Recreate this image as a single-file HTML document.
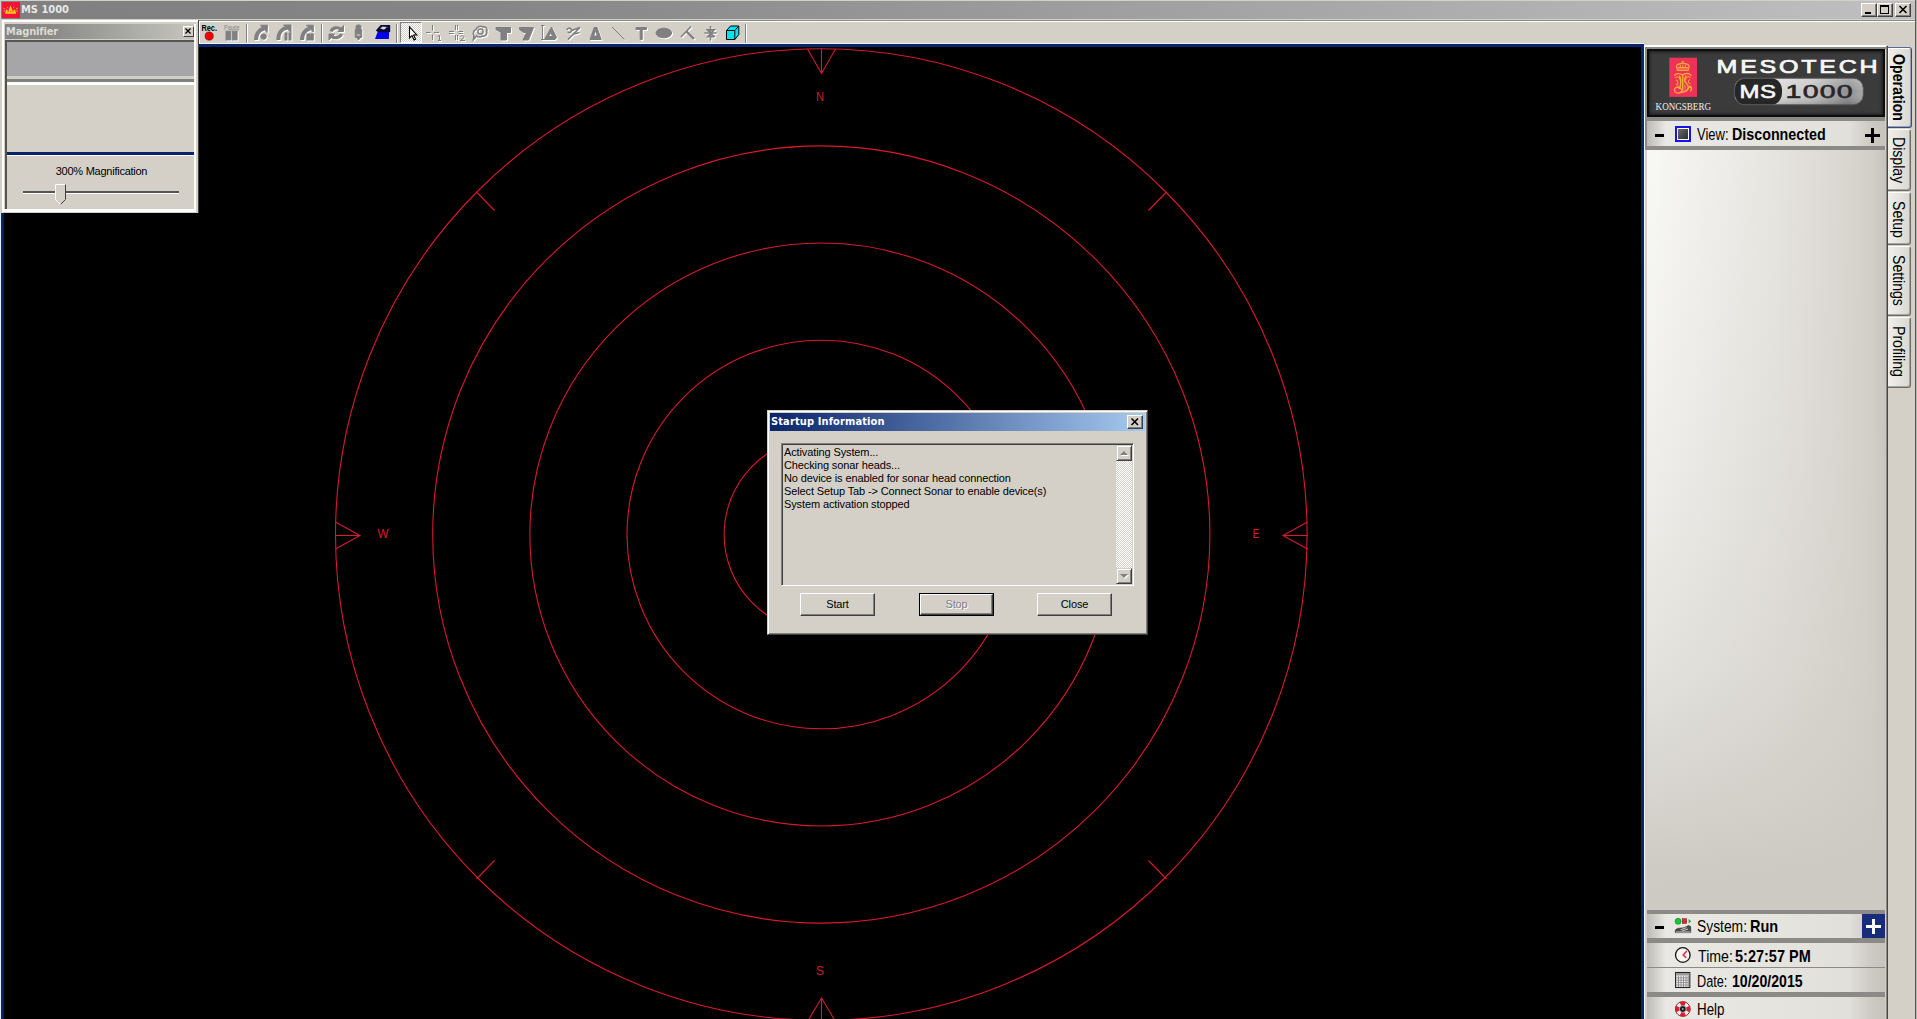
<!DOCTYPE html>
<html lang="en">
<head>
<meta charset="utf-8">
<title>MS 1000</title>
<style>
html,body{margin:0;padding:0;}
body{width:1917px;height:1019px;overflow:hidden;background:#d4d0c8;position:relative;font-family:"Liberation Sans",sans-serif;font-size:11px;color:#000;}
.abs{position:absolute;}
#titlebar{left:1px;top:0;width:1914px;height:19px;background:linear-gradient(to right,#808080 0%,#858585 25%,#c0c0c0 100%);border-top:1px solid #d4d0c8;box-sizing:border-box;}
#titletext{left:21px;top:3px;font-family:"DejaVu Sans Condensed","DejaVu Sans","Liberation Sans",sans-serif;font-weight:bold;font-size:11px;color:#e8e8e8;letter-spacing:0;line-height:14px;white-space:nowrap;}
#appicon{left:2px;top:2px;width:18px;height:16px;background:#f01438;}
.wbtn{top:3px;width:16px;height:14px;background:#d4d0c8;box-sizing:border-box;border:1px solid;border-color:#fff #404040 #404040 #fff;box-shadow:inset -1px -1px 0 #808080;}
#canvas{left:1px;top:44px;width:1643px;height:975px;background:#000;}
#topline{left:199px;top:44px;width:1445px;height:3px;background:#0a246a;}
#leftline{left:1px;top:213px;width:3px;height:806px;background:linear-gradient(to right,#0e2a72,#081a4a);}
#leftlight{left:0;top:213px;width:1px;height:806px;background:#e4e8fa;}
#rightline{left:1641px;top:44px;width:3px;height:975px;background:#0a246a;}

/* magnifier */
#mag{left:2px;top:20px;width:197px;height:193px;background:#d4d0c8;box-sizing:border-box;border:2px solid;border-color:#fff #d4d0c8 #d4d0c8 #fff;}
#magR{left:194px;top:24px;width:2px;height:188px;background:#fff;}
#magB{left:2px;top:209px;width:194px;height:3px;background:#fff;}
#magEdge{left:198px;top:20px;width:1px;height:193px;background:#404040;}
#magtitle{left:5px;top:24px;width:189px;height:15px;background:linear-gradient(to right,#858585 0%,#8a8a88 25%,#c6c6be 100%);}
#magtext{left:6px;top:24px;font-weight:bold;font-size:11px;line-height:15px;color:#dcdcd6;font-family:"DejaVu Sans Condensed","DejaVu Sans","Liberation Sans",sans-serif;letter-spacing:-0.15px;}
#magclose{left:183px;top:26px;width:11px;height:11px;background:#d4d0c8;box-sizing:border-box;border:1px solid;border-color:#fff #404040 #404040 #fff;}
#magframe{left:5px;top:40px;width:189px;height:169px;box-sizing:border-box;border-left:2px solid #55554f;border-top:2px solid #55554f;background:#d4d0c8;}
#maggray{left:7px;top:42px;width:187px;height:34px;background:#a6a6a9;}
#magl1{left:7px;top:76px;width:187px;height:3px;background:#cfcfc8;}
#magl2{left:7px;top:79px;width:187px;height:3px;background:#80807a;}
#magl3{left:7px;top:82px;width:187px;height:3px;background:#fff;}
#magnavy{left:7px;top:152px;width:187px;height:3px;background:#0a246a;}
#magnavyw{left:7px;top:155px;width:187px;height:1px;background:#fff;}
#maglabel{left:8px;top:164px;width:187px;text-align:center;font-size:11px;line-height:14px;letter-spacing:-0.25px;}
#track{left:23px;top:191px;width:156px;height:2px;background:#55554f;border-bottom:1px solid #fff;}

/* dialog */
#dlg{left:767px;top:410px;width:381px;height:225px;background:#d4d0c8;box-sizing:border-box;border:1px solid;border-color:#d4d0c8 #404040 #404040 #d4d0c8;box-shadow:inset 1px 1px 0 #fff,inset -1px -1px 0 #808080;}
#dlgtitle{left:770px;top:413px;width:375px;height:18px;background:linear-gradient(to right,#0a246a 0%,#a6caf0 100%);}
#dlgtext{left:771px;top:415px;font-family:"DejaVu Sans Condensed","DejaVu Sans","Liberation Sans",sans-serif;font-weight:bold;font-size:11px;line-height:14px;color:#fff;letter-spacing:0.12px;white-space:nowrap;}
#dlgclose{left:1127px;top:415px;width:16px;height:14px;background:#d4d0c8;box-sizing:border-box;border:1px solid;border-color:#fff #404040 #404040 #fff;box-shadow:inset -1px -1px 0 #808080;}
#dlgbox{left:781px;top:443px;width:353px;height:143px;box-sizing:border-box;border:1px solid;border-color:#808080 #fff #fff #808080;box-shadow:inset 1px 1px 0 #404040,inset -1px -1px 0 #d4d0c8;background:#d4d0c8;}
#dlglines{left:784px;top:446px;font-size:11px;line-height:13px;letter-spacing:-0.12px;white-space:nowrap;color:#000;}
#sbtrack{left:1116px;top:445px;width:16px;height:139px;background:repeating-conic-gradient(#fff 0% 25%,#d4d0c8 0% 50%) 0 0/2px 2px;}
.sbbtn{left:1116px;width:16px;height:16px;background:#d4d0c8;box-sizing:border-box;border:1px solid;border-color:#d4d0c8 #404040 #404040 #d4d0c8;box-shadow:inset 1px 1px 0 #fff,inset -1px -1px 0 #808080;}
.btn{top:593px;width:75px;height:23px;background:#d4d0c8;box-sizing:border-box;border:1px solid;border-color:#fff #404040 #404040 #fff;box-shadow:inset -1px -1px 0 #808080;text-align:center;font-size:11px;line-height:20px;letter-spacing:-0.12px;}

/* toolbar */
#tbEdgeD{left:198px;top:21px;width:1px;height:26px;background:#404040;}
#tbTopW{left:199px;top:21px;width:1716px;height:1px;background:#fff;}
#tbLeftW{left:199px;top:21px;width:1px;height:23px;background:#fff;}
#tbBotW{left:199px;top:43px;width:1445px;height:1px;background:#eef0f4;}
.sep{top:24px;width:1px;height:19px;background:#808080;border-right:1px solid #fff;}
#selbtn{left:400px;top:22px;width:22px;height:21px;box-sizing:border-box;background:repeating-conic-gradient(#fff 0% 25%,#d4d0c8 0% 50%) 0 0/2px 2px;border:1px solid;border-color:#808080 #fff #fff #808080;}
.ic .st{fill:none}
.ic path:not(.st),.ic rect,.ic circle:not(.st),.ic ellipse{stroke:none}

/* right panel */
#rp{left:1644px;top:44px;width:271px;height:975px;background:#d4d0c8;}
#rpW{left:1644px;top:45px;width:242px;height:2px;background:#fff;}
#rpWv{left:1644px;top:45px;width:1px;height:974px;background:#f4f4f2;}
#rpG{left:1645px;top:47px;width:241px;height:2px;background:#8a8a84;}
#rpGv{left:1645px;top:47px;width:2px;height:103px;background:#8a8a84;}
#rpgrad{left:1647px;top:150px;width:239px;height:762px;background:linear-gradient(to right,#f8f8f5 0%,#f0efec 25%,#e6e4df 55%,#dad7d1 82%,#d2cfc9 94%,#c6c3bd 100%);}
#rpgradv{left:1647px;top:150px;width:239px;height:762px;background:linear-gradient(to bottom,rgba(208,205,198,0) 0%,rgba(208,205,198,0.06) 15%,rgba(208,205,198,0.16) 32%,rgba(208,205,198,0.3) 50%,rgba(208,205,198,0.5) 68%,rgba(206,203,196,0.78) 84%,rgba(205,202,195,0.97) 94%,rgba(205,202,195,1) 100%);}
#rpedge{left:1886px;top:46px;width:2px;height:973px;background:linear-gradient(to right,#8a8882 0,#8a8882 1px,#48463f 1px,#48463f 2px);}
#logo{left:1647px;top:49px;width:238px;height:68px;background:#3b3b3b;box-sizing:border-box;border:2px solid #0c0c0c;box-shadow:inset 0 0 3px 1px #1c1c1c;}
#kred{left:1669px;top:58px;width:28px;height:39px;background:#ee3150;}
#kname{left:1655px;top:100px;font-family:"Liberation Serif",serif;font-size:10px;line-height:12px;color:#f2f2f2;letter-spacing:0.35px;white-space:nowrap;}
#meso{left:1717px;top:57px;font-family:"Liberation Sans",sans-serif;font-weight:bold;font-size:17px;line-height:20px;color:#f4f4f4;white-space:nowrap;transform-origin:0 0;}
#pill{left:1734px;top:78px;width:129px;height:27px;border-radius:10px;background:linear-gradient(to right,#262626 0,#262626 46px,#c8c8c8 47px,#eeeeee 60px,#d0d0d0 90px,#9a9a9a 118px,#b8b8b8 129px);box-sizing:border-box;border:1px solid #555;overflow:hidden;}
#pillms{left:1739px;top:81px;font-weight:bold;font-size:17px;line-height:20px;color:#f4f4f4;white-space:nowrap;transform-origin:0 0;}
#pill1000{left:1787px;top:81px;font-weight:bold;font-size:17px;line-height:20px;color:#d8d8d8;-webkit-text-stroke:1.2px #2a2a2a;white-space:nowrap;transform-origin:0 0;}
.row{left:1647px;width:238px;height:24px;background:linear-gradient(to right,#bdbbb5 0%,#e9e8e4 8%,#e6e4df 50%,#e2e0db 85%,#cfccc6 93%,#c6c3bd 100%);}
.rowsh{left:1647px;width:238px;background:#8b8a86;}
.lab{font-size:16.3px;line-height:18px;white-space:nowrap;transform-origin:0 0;color:#000;}
.labb{font-weight:bold;}
.minus{left:1655px;width:9px;height:3px;background:#000;}
.tab{left:1888px;width:23px;box-sizing:border-box;background:linear-gradient(to right,#f0efec,#dbd8d2);border:1px solid;border-color:#fff #6e6c66 #6e6c66 #8c8a84;border-left:none;border-radius:0 3px 3px 0;box-shadow:inset -1px -1px 0 #a8a6a0;}
.tabt{font-size:16px;line-height:18px;white-space:nowrap;transform-origin:0 0;color:#000;}
</style>
</head>
<body>
<!-- title bar -->
<div id="titlebar" class="abs"></div>
<div id="appicon" class="abs"></div>
<svg class="abs" style="left:2px;top:2px" width="18" height="16" viewBox="2 2 18 16"><path d="M5 13.8L6.2 9.2L8.4 11L10.6 5.6L12.8 11L15 9.2L16.2 13.8Z" fill="#ffc81e"/><path d="M3.5 8.2L5.2 9M3.4 11L5 11M17.7 8.2L16 9M17.8 11L16.2 11M7.2 6.8L8 8.2M14 6.8L13.2 8.2" stroke="#ffb43c" stroke-width="0.9" fill="none"/><path d="M7.5 11.6H9M10 11.6H11.4M12.4 11.6H13.8" stroke="#d05010" stroke-width="0.8"/></svg>
<div id="titletext" class="abs">MS 1000</div>
<div class="abs wbtn" style="left:1861px;width:16px"></div>
<div class="abs wbtn" style="left:1877px;width:16px"></div>
<div class="abs wbtn" style="left:1895px;width:16px"></div>

<svg class="abs" style="left:1861px;top:3px" width="50" height="14" viewBox="1861 3 50 14">
 <rect x="1865" y="12" width="6" height="2" fill="#000"/>
 <rect x="1880.5" y="5.5" width="8" height="8" fill="none" stroke="#000" stroke-width="1"/><rect x="1880" y="5" width="9" height="2" fill="#000"/>
 <path d="M1899.5 6L1906.5 13M1906.5 6L1899.5 13" stroke="#000" stroke-width="1.6" fill="none"/>
</svg>

<div class="abs" style="left:1915px;top:0;width:1px;height:1019px;background:#5a5852"></div>
<div class="abs" style="left:1916px;top:0;width:1px;height:1019px;background:#b4b2ac"></div>
<div class="abs" style="left:199px;top:20px;width:1716px;height:1px;background:#8c8a84"></div>
<!-- sonar canvas -->
<div id="canvas" class="abs"></div>
<div id="topline" class="abs"></div>
<div id="leftline" class="abs"></div>
<div id="leftlight" class="abs"></div>
<div id="rightline" class="abs"></div>
<svg class="abs" style="left:0;top:0" width="1917" height="1019" viewBox="0 0 1917 1019">
 <g fill="none" stroke="#d81a2c" stroke-width="1.1">
  <clipPath id="cv"><rect x="2" y="46" width="1641" height="973"/></clipPath>
  <g clip-path="url(#cv)">
   <circle cx="821.3" cy="534.5" r="97.15"/>
   <circle cx="821.3" cy="534.5" r="194.3"/>
   <circle cx="821.3" cy="534.5" r="291.45"/>
   <circle cx="821.3" cy="534.5" r="388.6"/>
   <circle cx="821.3" cy="534.5" r="485.8"/>
   <!-- N -->
   <path d="M807.5 49L821.5 73.5L835.5 49M821.5 48.5V73.5"/>
   <!-- S -->
   <path d="M807.5 1021.5L821.5 998L835.5 1021.5M821.5 1022V998"/>
   <!-- W -->
   <path d="M335.5 522L360 535.5L335.5 549M335 535.5H360"/>
   <!-- E -->
   <path d="M1307.5 522L1283 535.5L1307.5 549M1308 535.5H1283"/>
   <!-- diagonal ticks -->
   <path d="M1166.5 192L1148.5 210.5M476.5 192L494.5 210.5M1166.5 879L1148.5 860.5M476.5 879L494.5 860.5"/>
  </g>
  <g fill="#d81a2c" stroke="none" font-family="Liberation Sans, sans-serif" font-size="12.5" text-anchor="middle">
   <text x="820" y="101" textLength="8" lengthAdjust="spacingAndGlyphs">N</text>
   <text x="820" y="975" textLength="8" lengthAdjust="spacingAndGlyphs">S</text>
   <text x="383" y="538" textLength="11" lengthAdjust="spacingAndGlyphs">W</text>
   <text x="1256" y="538" textLength="7" lengthAdjust="spacingAndGlyphs">E</text>
  </g>
 </g>
</svg>


<!-- toolbar -->
<div id="tbEdgeD" class="abs"></div>
<div id="tbTopW" class="abs"></div>
<div id="tbLeftW" class="abs"></div>
<div id="tbBotW" class="abs"></div>
<div class="abs sep" style="left:246px"></div>
<div class="abs sep" style="left:321px"></div>
<div class="abs sep" style="left:396px"></div>
<div class="abs sep" style="left:745px"></div>
<div id="selbtn" class="abs"></div>
<svg class="abs" style="left:0;top:0" width="760" height="46" viewBox="0 0 760 46">
 <defs>
  <g id="icons">
   <!-- pause bars -->
   <rect x="226" y="31.2" width="4.8" height="8.7"/><rect x="232.3" y="31.2" width="4.8" height="8.7"/>
   <!-- arrow 1 -->
   <path d="M256 40C256 33 260 29.5 264 28.5" fill="none" stroke-width="4" class="st"/>
   <path d="M260.5 25.2L267.5 25.2L267 32.5Z"/><circle cx="263.6" cy="36.6" r="2.7"/>
   <!-- arrow 2 -->
   <path d="M278.3 40C278.3 32.5 282.5 28.5 287 27.8" fill="none" stroke-width="4" class="st"/>
   <path d="M283.5 25L291 25L291 32.5Z"/><rect x="285" y="33" width="2" height="7"/><rect x="289" y="33" width="2" height="7"/>
   <!-- arrow 3 -->
   <path d="M302 40C302 33 306 29.5 310 28.5" fill="none" stroke-width="4" class="st"/>
   <path d="M306.5 25.2L313.3 25.2L313.3 32Z"/><rect x="307" y="34" width="6.3" height="6"/>
   <!-- refresh -->
   <path d="M331 31.5C332.5 27.5 338 26.5 341 29.5" fill="none" stroke-width="3.2" class="st"/>
   <path d="M338 31.5L343.5 31.5L343.5 25.5Z"/>
   <path d="M341.5 34C340 38 334.5 39 331.5 36" fill="none" stroke-width="3.2" class="st"/>
   <path d="M334.5 34L329 34L329 40Z"/>
   <!-- device -->
   <rect x="356" y="25" width="5" height="4.5" rx="1.5"/><path d="M355.3 29.5H361.7V37.5H355.3ZM356.8 34H360.2V36H356.8Z" fill-rule="evenodd"/><path d="M356.5 37.5H360.5L358.5 40Z"/>
   <!-- bubble -->
   <path d="M476 29.5C477 26.5 481 25.5 483 27C486 26.5 488 29 486.5 31.5C488 34 485.5 36.5 482.5 36C480.5 37.5 477.5 37 476.5 36L473.5 39.5L474 35.5C472.5 33.5 473.5 30.5 476 29.5Z" fill="none" stroke-width="1.6" class="st"/>
   <circle cx="480.5" cy="31.5" r="2.6" fill="none" stroke-width="1.5" class="st"/>
   <!-- T flag -->
   <path d="M496 27.5H510.5V32.5H506.5V40H501V32.5L496 29.5Z"/>
   <!-- flag 2 -->
   <path d="M519.5 27.5H533.5L528.5 40H523L526.5 32.5H523.5L519.5 29.5Z"/>
   <!-- triangle ruler -->
   <path d="M542.5 25V40M541 25.5H544.5M541 39.5H544.5" fill="none" stroke-width="1" class="st"/>
   <path d="M544.5 39.5L551.5 27L556.5 37.5L555 39.5Z M548.5 36.5H552.5L551 32.5Z" fill-rule="evenodd"/>
   <!-- scribble -->
   <path d="M567 30C567.5 27.5 571 27.5 571.5 30C572 32.5 568.5 33.5 568 31.5M571.5 30.5L580 27.5L568 39.5M572 34.5L579.5 32.5" fill="none" stroke-width="1.7" class="st"/>
   <!-- A -->
   <path d="M590 39.5L594.2 27.5H597L601.2 39.5H590ZM593.6 36H597.6L595.6 30.5Z" fill-rule="evenodd"/>
   <!-- line -->
   <path d="M612 27L624.5 39.5" fill="none" stroke-width="1" class="st"/>
   <!-- T -->
   <path d="M636 27.5H646.5V29.5H642.2V39.5H640.2V29.5H636Z"/>
   <!-- cloud -->
   <ellipse cx="663.8" cy="33" rx="7.8" ry="4.8"/>
   <!-- hammer -->
   <path d="M681 37L691 26.5" fill="none" stroke-width="1.6" class="st"/><path d="M686.5 31.5L694 39" fill="none" stroke-width="2.4" class="st"/>
   <!-- gear -->
   <path d="M704.5 33H716.5M710.5 26V40.5M706.5 29L714.5 37" fill="none" stroke-width="1.5" class="st"/>
   <path d="M707 30H714L708 36.5H714.5" fill="none" stroke-width="1.8" class="st"/>
   <!-- crosshair 1 -->
   <path d="M426 32.5H430.5M434 32.5H439M432.5 25V30.5M432.5 34.5V40" fill="none" stroke-width="1" class="st"/>
   <path d="M437.5 36.5L439.5 35.5V40.5M438 40.5H441" fill="none" stroke-width="1" class="st"/>
   <!-- crosshair 2 -->
   <path d="M449 31.5H454M458.5 31.5H463M449 33.5H454M458.5 33.5H463M455.5 25V30M457.5 25V30M455.5 35V40M457.5 35V40" fill="none" stroke-width="1" class="st"/>
   <path d="M460.5 36.5C461.5 35 464.5 35.5 464 37.5L460.5 40.5H465" fill="none" stroke-width="1" class="st"/>
  </g>
 </defs>
 <g fill="#fff" stroke="#fff" transform="translate(1,1)" class="ic icw"><use href="#icons"/></g>
 <g fill="#808080" stroke="#808080" class="ic"><use href="#icons"/></g>
 <!-- Rec -->
 <text x="201.5" y="31" font-family="Liberation Sans, sans-serif" font-size="8.5" font-weight="bold" fill="#000" textLength="15.5" lengthAdjust="spacingAndGlyphs">Rec.</text>
 <circle cx="209.2" cy="36.1" r="4.1" fill="#f00000" stroke="#7a0000" stroke-width="0.6"/>
 <text x="224" y="30.3" font-family="Liberation Sans, sans-serif" font-size="6.5" fill="#808080" textLength="15.5" lengthAdjust="spacingAndGlyphs">Pause</text>
 <!-- blue icon -->
 <path d="M378 31L389.2 31L388.8 39L375 39Z" fill="#0000e6"/>
 <path d="M375.8 30.6L380.6 25H390.2V32H378Z" fill="#08083c"/>
 <path d="M379.6 28.6L382.6 26.2L387.6 27L384 30Z" fill="#d4d4e4" stroke="#000" stroke-width="0.5"/>
 <!-- cursor -->
 <path d="M409.5 27V38L412 35.6L414 40L415.6 39.3L413.6 35H416.8Z" fill="#fff" stroke="#000" stroke-width="1.1" stroke-linejoin="miter"/>
 <!-- cube -->
 <path d="M726.5 30.5L730.5 26H738.8V34.5L734.8 39.5H726.5Z" fill="#00e4ec" stroke="#000" stroke-width="1"/>
 <path d="M726.5 30.5H734.8V39.5M734.8 30.5L738.8 26" fill="none" stroke="#000" stroke-width="1"/>
</svg>

<!-- magnifier -->
<div class="abs" style="left:0;top:19px;width:198px;height:194px;background:#d4d0c8"></div>
<div id="mag" class="abs"></div>
<div id="magR" class="abs"></div>
<div id="magB" class="abs"></div>
<div id="magEdge" class="abs"></div>
<div id="magtitle" class="abs"></div>
<div id="magtext" class="abs">Magnifier</div>
<div id="magclose" class="abs"></div>
<svg class="abs" style="left:183px;top:26px" width="11" height="11"><path d="M2.5 2.5L7.5 7.5M7.5 2.5L2.5 7.5" stroke="#000" stroke-width="1.3" fill="none"/></svg>
<div id="magframe" class="abs"></div>
<div id="maggray" class="abs"></div>
<div id="magl1" class="abs"></div>
<div id="magl2" class="abs"></div>
<div id="magl3" class="abs"></div>
<div id="magnavy" class="abs"></div>
<div id="magnavyw" class="abs"></div>
<div id="maglabel" class="abs">300% Magnification</div>
<div id="track" class="abs"></div>
<svg class="abs" style="left:55px;top:184px" width="13" height="22"><path d="M0.5 0.5H10.5V15.5L5.5 20.5L0.5 15.5Z" fill="#d4d0c8" stroke="none"/><path d="M0.5 15.5V0.5H10.5" stroke="#fff" fill="none"/><path d="M10.5 0.5V15.5L5.5 20.5" stroke="#404040" fill="none"/><path d="M0.5 15.5L5.5 20.5" stroke="#fff" fill="none"/></svg>

<!-- dialog -->
<div id="dlg" class="abs"></div>
<div id="dlgtitle" class="abs"></div>
<div id="dlgtext" class="abs">Startup Information</div>
<div id="dlgclose" class="abs"></div>
<svg class="abs" style="left:1127px;top:415px" width="16" height="14"><path d="M4.5 3.5L11 10M11 3.5L4.5 10" stroke="#000" stroke-width="1.6" fill="none"/></svg>
<div id="dlgbox" class="abs"></div>
<div id="dlglines" class="abs">Activating System...<br>Checking sonar heads...<br>No device is enabled for sonar head connection<br>Select Setup Tab -&gt; Connect Sonar to enable device(s)<br>System activation stopped</div>
<div id="sbtrack" class="abs"></div>
<div class="abs sbbtn" style="top:445px"></div>
<div class="abs sbbtn" style="top:568px"></div>
<svg class="abs" style="left:1116px;top:445px" width="16" height="16"><path d="M5 11H13L9 7Z" fill="#fff"/><path d="M4 10H12L8 6Z" fill="#808080"/></svg>
<svg class="abs" style="left:1116px;top:568px" width="16" height="16"><path d="M5 7H13L9 11Z" fill="#fff"/><path d="M4 6H12L8 10Z" fill="#808080"/></svg>
<div class="abs btn" style="left:800px">Start</div>
<div class="abs" style="left:919px;top:593px;width:75px;height:23px;background:#000;"></div>
<div class="abs btn" style="left:920px;top:594px;width:73px;height:21px;line-height:18px;color:#808080;text-shadow:1px 1px 0 #fff;">Stop</div>
<div class="abs btn" style="left:1037px">Close</div>

<!-- right panel -->
<div id="rp" class="abs"></div>
<div id="rpW" class="abs"></div>
<div id="rpWv" class="abs"></div>
<div id="rpG" class="abs"></div>
<div id="rpGv" class="abs"></div>
<div id="rpgrad" class="abs"></div>
<div id="rpgradv" class="abs"></div>
<div id="rpedge" class="abs"></div>
<div id="logo" class="abs"></div>

<svg class="abs" style="left:1647px;top:49px" width="238" height="68" viewBox="1647 49 238 68">
 <defs>
  <linearGradient id="silver" x1="0" y1="0" x2="1" y2="0"><stop offset="0" stop-color="#f2f2f2"/><stop offset="0.25" stop-color="#e0e0e0"/><stop offset="0.6" stop-color="#c4c4c4"/><stop offset="0.88" stop-color="#8e8e8e"/><stop offset="1" stop-color="#a8a8a8"/></linearGradient>
  <linearGradient id="silverv" x1="0" y1="0" x2="0" y2="1"><stop offset="0" stop-color="#fff" stop-opacity="0.25"/><stop offset="0.5" stop-color="#fff" stop-opacity="0"/><stop offset="1" stop-color="#000" stop-opacity="0.18"/></linearGradient>
 </defs>
 <!-- kongsberg -->
 <rect x="1669.3" y="57.7" width="27.7" height="39.2" fill="#ee3156"/>
 <g fill="none" stroke="#f4a83a" stroke-width="1.35" stroke-linecap="round" stroke-linejoin="round">
  <path d="M1677.2 69C1675.4 66.2 1677.2 63.6 1680 64C1681 62.8 1684.6 62.8 1685.6 64C1688.4 63.6 1690.2 66.2 1688.4 69"/>
  <path d="M1677.4 70.3H1688.2M1678.2 67.8H1687.4" stroke-width="1.6"/>
  <path d="M1682.8 63V61.4M1682 62H1683.6" stroke-width="1"/>
  <path d="M1680.3 67.4V65.4M1685.3 67.4V65.4M1682.8 67.2V64.8" stroke-width="1"/>
  <path d="M1674.6 75.4C1676 73 1680 73.2 1682.4 75C1684.8 73.2 1689 72.8 1691 75.2"/>
  <path d="M1675.4 77.4C1677.6 76 1680.2 77.4 1680 79.6M1690.2 77.2C1688 76 1685.6 77.2 1685.8 79.4" stroke-width="1.1"/>
  <path d="M1679.6 76C1681.2 79 1681.2 85.5 1679.4 88.5M1682.7 74.6V90M1685.8 76C1684.2 79 1684.4 81.4 1686.2 83.2C1688.6 85.6 1688.8 88.6 1687 90.6" stroke-width="1.5"/>
  <path d="M1676.2 80C1678.4 81.2 1678.4 83.6 1676.4 84.8M1689.6 79.6C1687.6 81.2 1688 83 1690.2 83.6" stroke-width="1.1"/>
  <path d="M1677.6 86.2C1679 86 1680.4 86.8 1681 88M1684.4 85.4C1685.4 86.6 1685.6 88 1685 89.2" stroke-width="1"/>
  <path d="M1674.8 90.6C1673.2 87.8 1677.4 86.2 1680.4 88.2C1683.8 90.6 1680.6 93.8 1677 92.9C1675 92.4 1674.4 91.4 1674.8 90.6Z"/>
  <path d="M1681.4 92.4C1685 92 1688.2 89.4 1689.6 86.4M1690.8 91C1691.8 89 1691.5 87.2 1690.2 86.2"/>
 </g>
 <text x="1655.6" y="109.8" font-family="Liberation Serif, serif" font-size="10.4" fill="#f0f0f0" textLength="55.4" lengthAdjust="spacingAndGlyphs">KONGSBERG</text>
 <!-- mesotech -->
 <text transform="translate(1716.6,72.9) scale(1.42,1)" font-family="Liberation Sans, sans-serif" font-size="17.6" fill="#f6f6f6" stroke="#f6f6f6" stroke-width="0.7" letter-spacing="1.95">MESOTECH</text>
 <!-- pill -->
 <rect x="1734.5" y="78.2" width="128.8" height="26.6" rx="10" ry="10" fill="url(#silver)"/>
 <rect x="1734.5" y="78.2" width="128.8" height="26.6" rx="10" ry="10" fill="url(#silverv)"/>
 <rect x="1734.5" y="78.2" width="47.5" height="26.6" rx="10.5" ry="12" fill="#262626"/>
 <rect x="1734.5" y="78.2" width="128.8" height="26.6" rx="10" ry="10" fill="none" stroke="#565656" stroke-width="1"/>
 <text transform="translate(1739.6,97.9) scale(1.36,1)" font-family="Liberation Sans, sans-serif" font-size="17.6" fill="#f6f6f6" stroke="#f6f6f6" stroke-width="0.6" letter-spacing="0.3">MS</text>
 <text transform="translate(1785.6,97.9) scale(1.62,1)" font-family="Liberation Sans, sans-serif" font-size="17.6" fill="#262626" stroke="#262626" stroke-width="0.55" letter-spacing="0.75">1000</text>
</svg>

<!-- view row -->
<div class="abs rowsh" style="top:117px;height:5px"></div>
<div class="abs row" style="top:121px;height:25px"></div>
<div class="abs rowsh" style="top:146px;height:4px"></div>
<div class="abs minus" style="top:134px"></div>
<div class="abs" style="left:1675px;top:126px;width:16px;height:16px;box-sizing:border-box;border:2px solid #1414e6;background:#fff;"></div>
<div class="abs" style="left:1678px;top:129px;width:10px;height:10px;background:linear-gradient(135deg,#6a6a6a,#2e2e2e);"></div>
<div class="abs lab" style="left:1696.5px;top:125px;transform:scaleX(0.80)">View:</div>
<div class="abs lab labb" style="left:1731.8px;top:125px;transform:scaleX(0.877)">Disconnected</div>
<svg class="abs" style="left:1865px;top:128px" width="15" height="15"><path d="M0 7.5H15M7.5 0V15" stroke="#000" stroke-width="3"/></svg>

<!-- bottom rows -->
<div class="abs rowsh" style="top:910px;height:4px"></div>
<div class="abs row" style="top:914px"></div>
<div class="abs rowsh" style="top:938px;height:5px"></div>
<div class="abs row" style="top:943px"></div>
<div class="abs rowsh" style="top:967px;height:1px"></div>
<div class="abs row" style="top:968px"></div>
<div class="abs rowsh" style="top:992px;height:5px"></div>
<div class="abs row" style="top:997px"></div>
<div class="abs minus" style="top:926px"></div>
<div class="abs" style="left:1862px;top:914px;width:23px;height:24px;background:#182c7c;"></div>
<svg class="abs" style="left:1866px;top:919px" width="15" height="15"><path d="M0 7.5H15M7.5 0V15" stroke="#fff" stroke-width="3"/></svg>
<div class="abs lab" style="left:1697px;top:917px;transform:scaleX(0.85)">System:</div>
<div class="abs lab labb" style="left:1749.5px;top:917px;transform:scaleX(0.89)">Run</div>
<div class="abs lab" style="left:1697.6px;top:947px;transform:scaleX(0.87)">Time:</div>
<div class="abs lab labb" style="left:1735px;top:947px;transform:scaleX(0.89)">5:27:57 PM</div>
<div class="abs lab" style="left:1697px;top:972px;transform:scaleX(0.78)">Date:</div>
<div class="abs lab labb" style="left:1731.6px;top:972px;transform:scaleX(0.866)">10/20/2015</div>
<div class="abs lab" style="left:1696.6px;top:1000px;transform:scaleX(0.82)">Help</div>


<!-- row icons -->
<svg class="abs" style="left:1670px;top:914px" width="26" height="105" viewBox="1670 914 26 105">
 <!-- system -->
 <circle cx="1678.1" cy="921.3" r="3" fill="#18c832" stroke="#0a7a1a" stroke-width="0.6"/>
 <rect x="1682.3" y="918.7" width="4.4" height="4.8" fill="#d8283c" stroke="#7a1420" stroke-width="0.5"/>
 <path d="M1688.6 919L1691.2 921.2L1688.6 923.4Z" fill="#18a832"/>
 <path d="M1675.2 931.5C1675 929.5 1677 928 1679.5 928.2L1684 927.8L1688.5 925.6L1690.6 926.5L1690.8 932.6H1675.5Z" fill="#4a4a4a" stroke="#222" stroke-width="0.6"/>
 <path d="M1680.5 929.8L1686.5 927.6M1682 931L1688 929M1676 932H1690.5" stroke="#e8e8e8" stroke-width="0.8" fill="none"/>
 <!-- clock -->
 <circle cx="1682.8" cy="955" r="7.3" fill="#f4f4f2" stroke="#111" stroke-width="1.3"/>
 <path d="M1686.8 951L1683.2 955L1686.2 957.8" fill="none" stroke="#e8283c" stroke-width="1.5"/>
 <!-- calendar -->
 <rect x="1675.6" y="972.5" width="14.2" height="15" fill="#f2f2f2" stroke="#222" stroke-width="1.1"/>
 <rect x="1676.2" y="973" width="13" height="2.4" fill="#9a9a9a"/>
 <path d="M1678.5 975.5V987M1681 975.5V987M1683.5 975.5V987M1686 975.5V987M1688.2 975.5V987M1676.2 977.8H1689.2M1676.2 980.2H1689.2M1676.2 982.6H1689.2M1676.2 985H1689.2" stroke="#8a8a8a" stroke-width="0.9" fill="none"/>
 <!-- help -->
 <circle cx="1682.8" cy="1009" r="7.4" fill="#f6f6f6" stroke="#8a1018" stroke-width="0.9"/>
 <path d="M1682.8 1009L1679.6 1002.2A7.5 7.5 0 0 1 1686 1002.2ZM1682.8 1009L1689.6 1005.8A7.5 7.5 0 0 1 1689.6 1012.2ZM1682.8 1009L1686 1015.8A7.5 7.5 0 0 1 1679.6 1015.8ZM1682.8 1009L1676 1012.2A7.5 7.5 0 0 1 1676 1005.8Z" fill="#d81e30"/>
 <circle cx="1682.8" cy="1009" r="3.4" fill="#1a1a1a" stroke="#e6e6e6" stroke-width="0.7"/>
 <circle cx="1682.8" cy="1009" r="0.9" fill="#b0b0b0"/>
</svg>

<!-- tabs -->
<div class="abs tab" style="top:129px;height:62px"></div>
<div class="abs tab" style="top:192px;height:53px"></div>
<div class="abs tab" style="top:246px;height:70px"></div>
<div class="abs tab" style="top:317px;height:71px"></div>
<div class="abs tab" style="top:47px;height:81px;left:1888px;width:24px;border-color:#5a6a9a #3c4a78 #3c4a78 #5a6a9a;box-shadow:inset -1px -1px 0 #98a0b8,inset 1px 1px 0 #fff;"></div>
<div class="abs tabt labb" style="left:1908px;top:54px;font-size:16.5px;transform:rotate(90deg) scaleX(0.86)">Operation</div>
<div class="abs tabt" style="left:1907px;top:137px;transform:rotate(90deg) scaleX(0.88)">Display</div>
<div class="abs tabt" style="left:1907px;top:201px;transform:rotate(90deg) scaleX(0.88)">Setup</div>
<div class="abs tabt" style="left:1907px;top:255px;transform:rotate(90deg) scaleX(0.88)">Settings</div>
<div class="abs tabt" style="left:1907px;top:326px;transform:rotate(90deg) scaleX(0.88)">Profiling</div>
</body>
</html>
